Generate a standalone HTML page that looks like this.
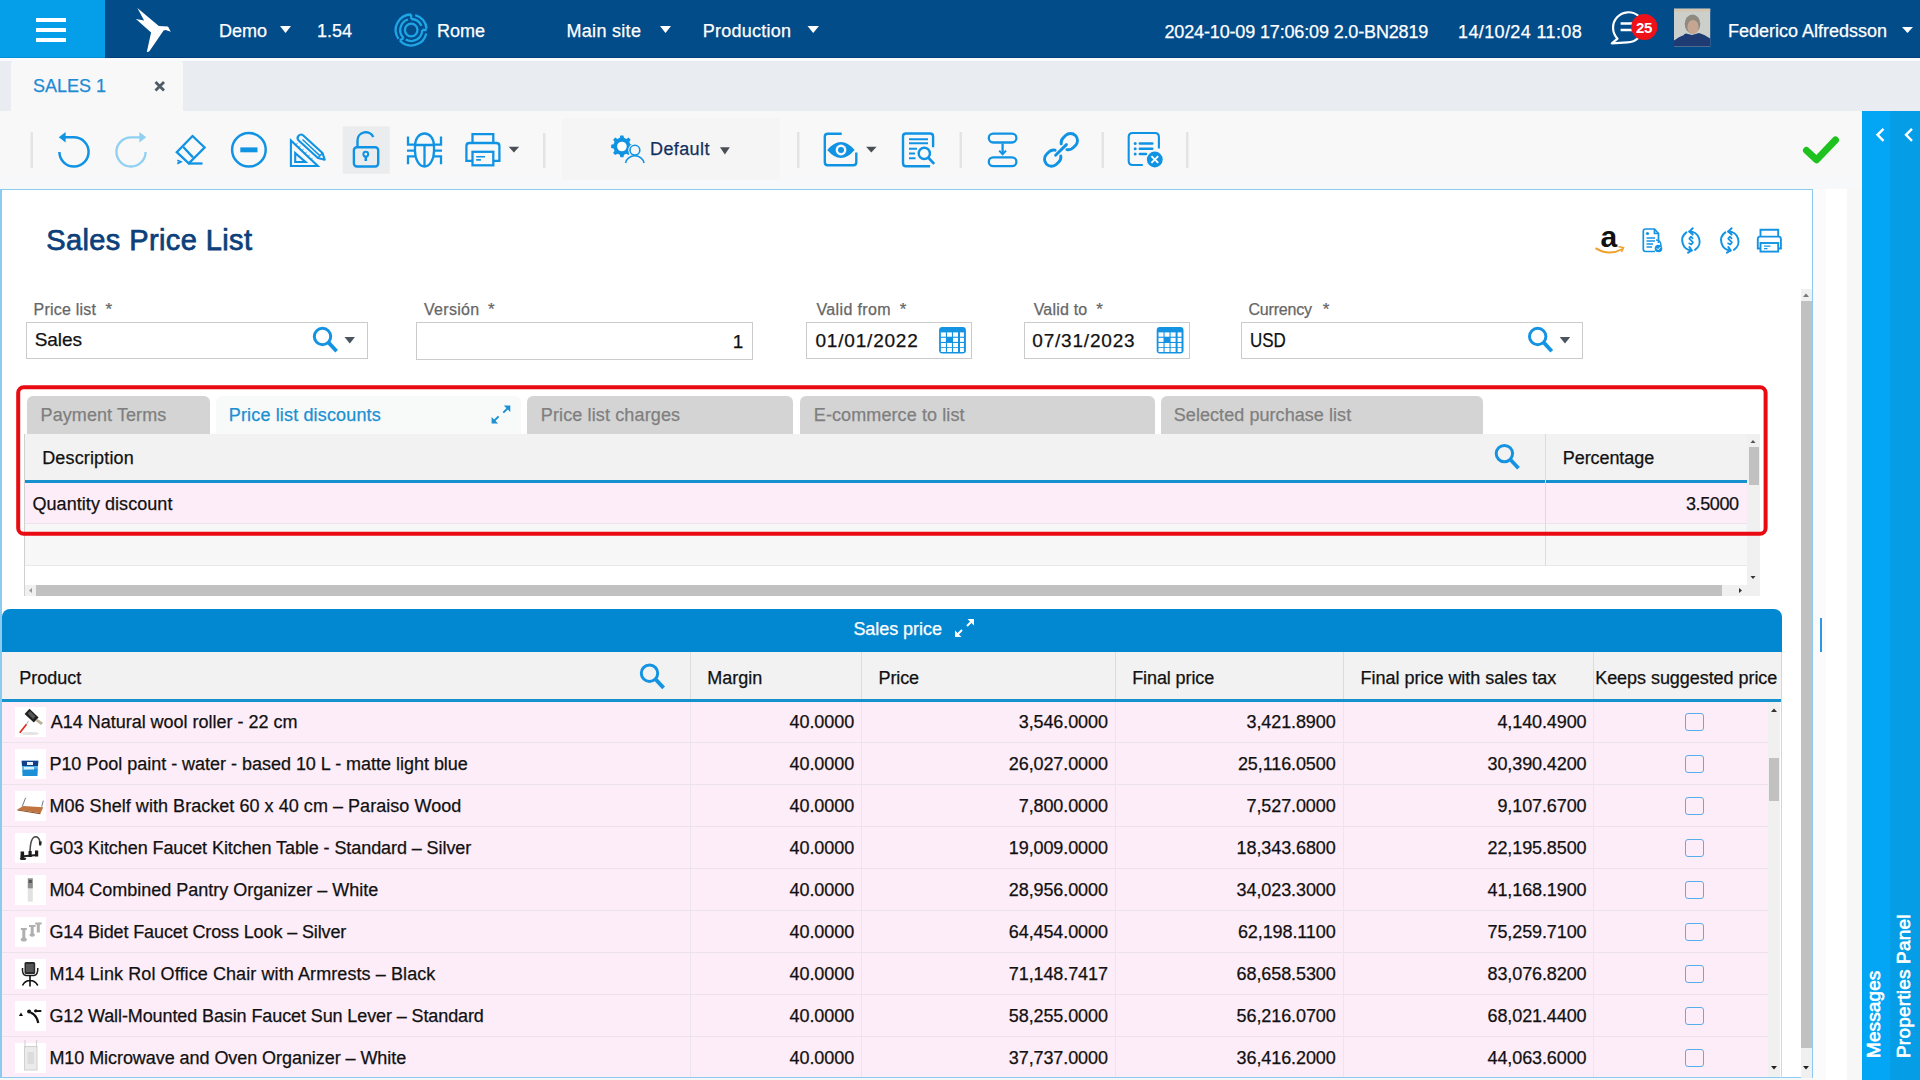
<!DOCTYPE html>
<html><head><meta charset="utf-8">
<style>
html,body{margin:0;padding:0}
body{width:1920px;height:1080px;position:relative;overflow:hidden;background:#f7f7f7;font-family:"Liberation Sans",sans-serif;color:#111}
.a{position:absolute;white-space:nowrap;line-height:1;-webkit-text-stroke:0.25px currentColor}
.r{position:absolute}
svg{position:absolute;overflow:visible}
</style></head>
<body>

<div class="r" style="left:0px;top:0px;width:1920px;height:58px;background:#034c8a;"></div>
<div class="r" style="left:0px;top:57px;width:1920px;height:1px;background:#023f78;"></div>
<div class="r" style="left:0px;top:0px;width:105px;height:58px;background:#049fe8;"></div>
<div class="r" style="left:0px;top:57px;width:105px;height:1px;background:#0390d8;"></div>
<div class="r" style="left:36px;top:18px;width:30px;height:4px;background:#fff;"></div>
<div class="r" style="left:36px;top:28px;width:30px;height:4px;background:#fff;"></div>
<div class="r" style="left:36px;top:38px;width:30px;height:4px;background:#fff;"></div>
<svg style="left:0;top:0" width="1920" height="58">
  <path d="M137.4,8.1 L158.8,26.1 L168,26.4 L170.8,31.7 L165.6,30 L163.6,30.5 L150.6,49.5 Q149,52.5 146.8,52 L151.1,32.4 L135.9,18.9 L144.1,20.6 Z" fill="#fff"/>
  <path d="M411.20,14.50 A15.5,15.5 0 0 0 398.50,38.89 M415.21,15.03 A15.5,15.5 0 0 1 426.64,28.65 M426.30,33.49 A15.5,15.5 0 0 1 399.86,40.57 M411.20,19.00 A11,11 0 0 1 421.40,25.88 M407.98,19.48 A11,11 0 0 0 403.70,38.04 M422.20,30.00 A11,11 0 0 1 405.70,39.53 M411.20,19.00 L411.20,14.50 M422.20,30.00 L426.70,30.00 M403.70,38.04 L399.86,40.57" fill="none" stroke="#1ea6e6" stroke-width="2.3"/>
  <circle cx="411.2" cy="30" r="6.3" fill="none" stroke="#1ea6e6" stroke-width="2.3"/>
  <path d="M280,26 L291,26 L285.5,33 Z" fill="#fff"/>
  <path d="M660,26 L671,26 L665.5,33 Z" fill="#fff"/>
  <path d="M807.5,26 L819,26 L813.2,33 Z" fill="#fff"/>
  <path d="M1902,27 L1913,27 L1907.5,33 Z" fill="#fff"/>
  <!-- chat -->
  <path d="M1638.46,15.84 A15.5,15.5 0 0 0 1617.54,38.67 L1611.8,43.3 L1627.5,42.3 A15.5,15.5 0 0 0 1638.46,37.76" fill="none" stroke="#fff" stroke-width="2.2" stroke-linejoin="round"/>
  <path d="M1620.6,23.5 L1634,23.5 M1620.6,30 L1634,30" stroke="#fff" stroke-width="2.4"/>
  <circle cx="1644.3" cy="27" r="13.1" fill="#ee1118"/>
  <!-- avatar -->
  <rect x="1674" y="8.7" width="36.2" height="37.9" fill="#cdd0ca"/>
  <rect x="1674" y="8.7" width="36.2" height="3" fill="#d3c6b2"/>
  <ellipse cx="1692.5" cy="24" rx="7.8" ry="9.5" fill="#8f8a80"/>
  <ellipse cx="1693" cy="27" rx="5.6" ry="7" fill="#c6a592"/>
  <path d="M1674,46.6 L1674,40 Q1680,35.5 1686,33.5 L1692,35 L1699,33 Q1706,35 1710.2,38.5 L1710.2,46.6 Z" fill="#1f3b73"/>
  <path d="M1674,40 Q1679,36 1684,34.5" fill="none" stroke="#c9d6e6" stroke-width="1"/>
</svg>
<div class="a" style="left:219.00px;top:21.65px;font-size:18px;color:#fff;">Demo</div>
<div class="a" style="left:317.00px;top:21.65px;font-size:18px;color:#fff;">1.54</div>
<div class="a" style="left:437.00px;top:21.65px;font-size:18px;color:#fff;">Rome</div>
<div class="a" style="left:566.50px;top:21.65px;font-size:18px;color:#fff;letter-spacing:0.3px;">Main site</div>
<div class="a" style="left:702.70px;top:21.65px;font-size:18px;color:#fff;letter-spacing:0.25px;">Production</div>
<div class="a" style="left:1164.50px;top:22.65px;font-size:18px;color:#fff;letter-spacing:-0.15px;">2024-10-09 17:06:09 2.0-BN2819</div>
<div class="a" style="left:1458.00px;top:22.65px;font-size:18px;color:#fff;letter-spacing:0.38px;">14/10/24 11:08</div>
<div class="a" style="left:1728.00px;top:21.65px;font-size:18px;color:#fff;">Federico Alfredsson</div>
<div class="a" style="left:1636.00px;top:19.74px;font-size:15px;color:#fff;font-weight:bold;-webkit-text-stroke:0;letter-spacing:-0.3px;">25</div>
<div class="r" style="left:0px;top:58px;width:1920px;height:53px;background:#e9ecf0;"></div>
<div class="r" style="left:0px;top:58px;width:1920px;height:3px;background:#f9fafb;"></div>
<div class="r" style="left:11px;top:61px;width:172px;height:50px;background:#f8f8f9;border-radius:3px 3px 0 0;"></div>
<div class="a" style="left:33.00px;top:77.05px;font-size:18px;color:#1e8bd3;">SALES 1</div>
<svg style="left:0;top:0" width="200" height="120"><path d="M155.5,82 L164,90.5 M164,82 L155.5,90.5" stroke="#4f5b66" stroke-width="2.8"/></svg>
<div class="r" style="left:0px;top:111px;width:1862px;height:78px;background:#f8f8f8;"></div>
<div class="r" style="left:0px;top:178px;width:1862px;height:11px;background:#f6f8fa;"></div>
<div class="r" style="left:562px;top:118px;width:218px;height:62px;background:#f5f5f6;"></div>
<div class="a" style="left:650.00px;top:139.85px;font-size:18px;color:#13305c;letter-spacing:0.4px;">Default</div>
<div class="r" style="left:1862px;top:111px;width:28px;height:969px;background:#03a5f5;"></div>
<div class="r" style="left:1890px;top:111px;width:30px;height:969px;background:#049de6;"></div>
<div class="r" style="left:1813px;top:189px;width:13px;height:891px;background:#fbfbfb;"></div>
<div class="r" style="left:1826px;top:189px;width:21px;height:891px;background:#ffffff;"></div>
<div class="r" style="left:0;top:189px;width:1813px;height:889px;background:#fff;border:1px solid #8ccbf0;border-left:2px solid #8ccbf0;box-sizing:border-box"></div>
<div class="r" style="left:1820px;top:618px;width:1.5px;height:34px;background:#2b98e6;"></div>
<div class="a" style="left:46.20px;top:226.02px;font-size:29px;color:#0d3f7a;letter-spacing:0.4px;-webkit-text-stroke:0.75px #0d3f7a;">Sales Price List</div>
<svg style="left:0;top:0" width="1920" height="300">
  <text x="1600.5" y="247" font-family="Liberation Sans" font-weight="bold" font-size="30" fill="#111">a</text>
  <path d="M1595.5,248.2 Q1609,256.5 1622.5,249" fill="none" stroke="#f0a02c" stroke-width="2"/>
  <path d="M1618.5,246.5 L1623.5,247.8 L1621.5,252" fill="none" stroke="#f0a02c" stroke-width="1.6"/>
  <g fill="none" stroke="#1493e3" stroke-width="1.7">
    <path d="M1658.5,243 L1658.5,236 M1655,251.5 L1645.5,251.5 Q1643.3,251.5 1643.3,249.3 L1643.3,231.3 Q1643.3,229 1645.5,229 L1654.5,229 L1658.5,233.5 L1658.5,236"/>
    <path d="M1654.5,229 L1654.5,233.5 L1658.5,233.5"/>
    <path d="M1646.5,238 L1655,238 M1646.5,241 L1655,241 M1646.5,244 L1653,244 M1646.5,247 L1652,247" stroke-width="1.3"/>
    <path d="M1656,240 Q1661,240 1661,246" stroke-width="1.4"/>
  </g>
  <circle cx="1647.5" cy="233.5" r="1.6" fill="#1493e3"/>
  <circle cx="1658.5" cy="248.5" r="3.8" fill="#1493e3"/>
  <path d="M1656.8,248.3 L1658.2,249.8 L1660.5,247" fill="none" stroke="#fff" stroke-width="1"/>

  <g fill="none" stroke="#1493e3" stroke-width="2" stroke-linecap="round" stroke-linejoin="round">
    <path d="M1689.3,231.4 A10,10 0 0 1 1695.0,249.8"/>
    <path d="M1692.7,228.3 L1689.3,231.6 L1692.7,234.6"/>
    <path d="M1686.4,232.4 A10,10 0 0 0 1691.7,250.5"/>
    <path d="M1689.5,247.1 L1691.7,250.5 L1688.1,252.7"/>
    <path d="M1692.7,238.4 L1691.0,236.6 L1689.3,238.6 L1693.0,242.4 L1691.3,244.6 L1689.2,243.3" stroke-width="1.7"/>
  </g>
  <g fill="none" stroke="#1493e3" stroke-width="2" stroke-linecap="round" stroke-linejoin="round">
    <path d="M1728.2,231.4 A10,10 0 0 1 1733.9,249.8"/>
    <path d="M1731.6,228.3 L1728.2,231.6 L1731.6,234.6"/>
    <path d="M1725.3,232.4 A10,10 0 0 0 1730.6,250.5"/>
    <path d="M1728.4,247.1 L1730.6,250.5 L1727.0,252.7"/>
    <path d="M1731.6,238.4 L1729.9,236.6 L1728.2,238.6 L1731.9,242.4 L1730.2,244.6 L1728.1,243.3" stroke-width="1.7"/>
  </g>
  <g fill="none" stroke="#1493e3" stroke-width="1.9">
    <path d="M1760.5,236.5 L1760.5,229.8 L1778.2,229.8 L1778.2,236.5"/>
    <path d="M1760.5,248.5 L1757.8,248.5 L1757.8,239 Q1757.8,236.6 1760.2,236.6 L1778.5,236.6 Q1780.9,236.6 1780.9,239 L1780.9,248.5 L1778.2,248.5"/>
    <rect x="1760.5" y="243" width="17.7" height="8.6"/>
    <path d="M1764,246.2 L1770.5,246.2 M1764,248.6 L1767.5,248.6" stroke-width="1.3"/>
  </g>
</svg>
<div class="a" style="left:33.60px;top:301.81px;font-size:16px;color:#666;letter-spacing:0.2px;">Price list</div>
<div class="a" style="left:105.50px;top:301.18px;font-size:17px;color:#666;">*</div>
<div class="a" style="left:424.00px;top:301.81px;font-size:16px;color:#666;letter-spacing:0.3px;">Versión</div>
<div class="a" style="left:488.00px;top:301.18px;font-size:17px;color:#666;">*</div>
<div class="a" style="left:816.50px;top:301.81px;font-size:16px;color:#666;letter-spacing:0.35px;">Valid from</div>
<div class="a" style="left:899.70px;top:301.18px;font-size:17px;color:#666;">*</div>
<div class="a" style="left:1033.70px;top:301.81px;font-size:16px;color:#666;letter-spacing:0.2px;">Valid to</div>
<div class="a" style="left:1096.30px;top:301.18px;font-size:17px;color:#666;">*</div>
<div class="a" style="left:1248.50px;top:301.81px;font-size:16px;color:#666;letter-spacing:-0.2px;">Currency</div>
<div class="a" style="left:1322.80px;top:301.18px;font-size:17px;color:#666;">*</div>
<div class="r" style="left:26px;top:322px;width:341.5px;height:37px;background:#fff;border:1.5px solid #cbcbcb;box-sizing:border-box"></div>
<div class="r" style="left:416px;top:322px;width:336.5px;height:38px;background:#fff;border:1.5px solid #cbcbcb;box-sizing:border-box"></div>
<div class="r" style="left:806px;top:322px;width:166px;height:37px;background:#fff;border:1.5px solid #cbcbcb;box-sizing:border-box"></div>
<div class="r" style="left:1023.5px;top:322px;width:166.0px;height:37px;background:#fff;border:1.5px solid #cbcbcb;box-sizing:border-box"></div>
<div class="r" style="left:1241px;top:322px;width:341.5px;height:37px;background:#fff;border:1.5px solid #cbcbcb;box-sizing:border-box"></div>
<div class="a" style="left:34.70px;top:330.02px;font-size:19px;color:#111;letter-spacing:-0.05px;">Sales</div>
<div class="a" style="right:1176.80px;top:331.52px;font-size:19px;color:#111;">1</div>
<div class="a" style="left:815.50px;top:330.82px;font-size:19px;color:#111;letter-spacing:0.8px;">01/01/2022</div>
<div class="a" style="left:1032.30px;top:330.82px;font-size:19px;color:#111;letter-spacing:0.8px;">07/31/2023</div>
<div class="a" style="left:1250.20px;top:331.06px;font-size:19.5px;color:#111;transform:scaleX(0.87);transform-origin:0 0;">USD</div>
<svg style="left:0;top:0" width="1920" height="400"><circle cx="322.50" cy="336.50" r="8.20" fill="none" stroke="#1493e3" stroke-width="3.0"/><path d="M328.40,342.40 L336.60,351.20" stroke="#1493e3" stroke-width="3.75" stroke-linecap="butt"/><path d="M344.5,337 L355,337 L349.8,343.6 Z" fill="#4a5560"/><circle cx="1537.70" cy="336.50" r="8.20" fill="none" stroke="#1493e3" stroke-width="3.0"/><path d="M1543.60,342.40 L1551.80,351.20" stroke="#1493e3" stroke-width="3.75" stroke-linecap="butt"/><path d="M1559.7,337 L1570.2,337 L1565,343.6 Z" fill="#4a5560"/><rect x="939.1" y="326.9" width="26.8" height="26.6" rx="3.2" fill="#1493e3"/><rect x="940.9" y="332.4" width="5.0" height="4.3" fill="#fff"/><rect x="947.0" y="332.4" width="4.9" height="4.3" fill="#fff"/><rect x="953.0" y="332.4" width="5.0" height="4.3" fill="#fff"/><rect x="960.0" y="332.4" width="3.9" height="4.3" fill="#fff"/><rect x="940.9" y="337.8" width="5.0" height="4.1" fill="#fff"/><rect x="953.0" y="337.8" width="5.0" height="4.1" fill="#fff"/><rect x="960.0" y="337.8" width="3.9" height="4.1" fill="#fff"/><rect x="940.9" y="343.0" width="5.0" height="4.2" fill="#fff"/><rect x="947.0" y="343.0" width="4.9" height="4.2" fill="#fff"/><rect x="953.0" y="343.0" width="5.0" height="4.2" fill="#fff"/><rect x="960.0" y="343.0" width="3.9" height="4.2" fill="#fff"/><rect x="940.9" y="348.0" width="5.0" height="4.0" fill="#fff"/><rect x="947.0" y="348.0" width="4.9" height="4.0" fill="#fff"/><rect x="953.0" y="348.0" width="5.0" height="4.0" fill="#fff"/><rect x="960.0" y="348.0" width="3.9" height="4.0" fill="#fff"/><rect x="1156.7" y="326.9" width="26.8" height="26.6" rx="3.2" fill="#1493e3"/><rect x="1158.5" y="332.4" width="5.0" height="4.3" fill="#fff"/><rect x="1164.6" y="332.4" width="4.9" height="4.3" fill="#fff"/><rect x="1170.6" y="332.4" width="5.0" height="4.3" fill="#fff"/><rect x="1177.6" y="332.4" width="3.9" height="4.3" fill="#fff"/><rect x="1158.5" y="337.8" width="5.0" height="4.1" fill="#fff"/><rect x="1170.6" y="337.8" width="5.0" height="4.1" fill="#fff"/><rect x="1177.6" y="337.8" width="3.9" height="4.1" fill="#fff"/><rect x="1158.5" y="343.0" width="5.0" height="4.2" fill="#fff"/><rect x="1164.6" y="343.0" width="4.9" height="4.2" fill="#fff"/><rect x="1170.6" y="343.0" width="5.0" height="4.2" fill="#fff"/><rect x="1177.6" y="343.0" width="3.9" height="4.2" fill="#fff"/><rect x="1158.5" y="348.0" width="5.0" height="4.0" fill="#fff"/><rect x="1164.6" y="348.0" width="4.9" height="4.0" fill="#fff"/><rect x="1170.6" y="348.0" width="5.0" height="4.0" fill="#fff"/><rect x="1177.6" y="348.0" width="3.9" height="4.0" fill="#fff"/></svg>
<div class="r" style="left:27px;top:396px;width:183px;height:38px;background:#d4d4d4;border-radius:6px 6px 0 0"></div>
<div class="r" style="left:215.5px;top:396px;width:305.5px;height:38px;background:#f8f9f9;border-radius:6px 6px 0 0"></div>
<div class="r" style="left:527px;top:396px;width:266px;height:38px;background:#d4d4d4;border-radius:6px 6px 0 0"></div>
<div class="r" style="left:799.5px;top:396px;width:355.0px;height:38px;background:#d4d4d4;border-radius:6px 6px 0 0"></div>
<div class="r" style="left:1161px;top:396px;width:322px;height:38px;background:#d4d4d4;border-radius:6px 6px 0 0"></div>
<div class="a" style="left:40.60px;top:405.65px;font-size:18px;color:#7f7f7f;letter-spacing:0.08px;">Payment Terms</div>
<div class="a" style="left:228.80px;top:405.65px;font-size:18px;color:#1b90d2;letter-spacing:0.15px;">Price list discounts</div>
<div class="a" style="left:540.80px;top:405.65px;font-size:18px;color:#7f7f7f;letter-spacing:0.13px;">Price list charges</div>
<div class="a" style="left:813.80px;top:405.65px;font-size:18px;color:#7f7f7f;letter-spacing:0.1px;">E-commerce to list</div>
<div class="a" style="left:1173.80px;top:405.65px;font-size:18px;color:#7f7f7f;letter-spacing:0.06px;">Selected purchase list</div>
<div class="r" style="left:24px;top:434px;width:1px;height:162px;background:#d0d0d0;"></div>
<div class="r" style="left:25px;top:434px;width:1722px;height:46px;background:#f2f2f2;"></div>
<div class="r" style="left:25px;top:480px;width:1722px;height:3px;background:#1592cd;"></div>
<div class="r" style="left:25px;top:483px;width:1722px;height:41px;background:#fdedf8;"></div>
<div class="r" style="left:25px;top:523px;width:1722px;height:1px;background:#ece4ea;"></div>
<div class="r" style="left:25px;top:524px;width:1722px;height:42px;background:#f7f7f7;"></div>
<div class="r" style="left:25px;top:565px;width:1722px;height:1px;background:#e8e8e8;"></div>
<div class="r" style="left:1545px;top:434px;width:1px;height:132px;background:#dcdcdc;"></div>
<div class="r" style="left:1747px;top:434px;width:12.5px;height:162px;background:#f0f0f0;"></div>
<div class="r" style="left:1748.5px;top:447px;width:10px;height:38px;background:#c1c1c1;"></div>
<div class="r" style="left:36px;top:585px;width:1686px;height:11px;background:#c1c1c1;"></div>
<div class="r" style="left:25px;top:585px;width:11px;height:11px;background:#f0f0f0;"></div>
<div class="r" style="left:1722px;top:585px;width:25px;height:11px;background:#f0f0f0;"></div>
<div class="a" style="left:42.20px;top:448.65px;font-size:18px;color:#111;letter-spacing:0.15px;">Description</div>
<div class="a" style="left:1562.80px;top:448.95px;font-size:18px;color:#111;letter-spacing:-0.08px;">Percentage</div>
<div class="a" style="left:32.50px;top:494.65px;font-size:18px;color:#111;letter-spacing:0.05px;">Quantity discount</div>
<div class="a" style="right:181.40px;top:495.05px;font-size:18px;color:#111;letter-spacing:-0.4px;">3.5000</div>
<svg style="left:0;top:0" width="1920" height="700"><path d="M493.1,421.9 L498.6,416.4 M508.8,407.1 L503.3,412.6" stroke="#1b90d2" stroke-width="2"/><path d="M491.6,423.4 L491.6,416.9 L498.1,423.4 Z M510.3,405.6 L510.3,412.1 L503.8,405.6 Z" fill="#1b90d2"/><circle cx="1504.40" cy="453.60" r="8.20" fill="none" stroke="#1493e3" stroke-width="3.0"/><path d="M1510.30,459.50 L1518.50,468.30" stroke="#1493e3" stroke-width="3.75" stroke-linecap="butt"/><path d="M1750.5,443 L1755.5,443 L1753,440 Z" fill="#555"/><path d="M1750.5,576 L1755.5,576 L1753,579 Z" fill="#333"/><path d="M29,590.5 L32,588 L32,593 Z" fill="#999"/><path d="M1742,590.5 L1739,588 L1739,593 Z" fill="#333"/></svg>
<div class="r" style="left:2px;top:609px;width:1780px;height:43px;background:#0288d1;border-radius:8px 8px 0 0"></div>
<div class="a" style="left:853.40px;top:620.15px;font-size:18px;color:#fff;letter-spacing:-0.05px;">Sales price</div>
<div class="r" style="left:2px;top:652px;width:1779px;height:47px;background:#f2f2f2;"></div>
<div class="r" style="left:2px;top:699px;width:1779px;height:3px;background:#1592cd;"></div>
<div class="r" style="left:1781px;top:652px;width:1px;height:426px;background:#d6d6d6;"></div>
<div class="r" style="left:690px;top:652px;width:1.3px;height:47px;background:#dcdcdc;"></div>
<div class="r" style="left:861px;top:652px;width:1.3px;height:47px;background:#dcdcdc;"></div>
<div class="r" style="left:1115px;top:652px;width:1.3px;height:47px;background:#dcdcdc;"></div>
<div class="r" style="left:1343px;top:652px;width:1.3px;height:47px;background:#dcdcdc;"></div>
<div class="r" style="left:1593px;top:652px;width:1.3px;height:47px;background:#dcdcdc;"></div>
<svg style="left:0;top:0" width="1920" height="700"><path d="M956.5,635.5 L962,630 M972.5,620.5 L967,626" stroke="#fff" stroke-width="2"/><path d="M955,637 L955,630.5 L961.5,637 Z M974,619 L974,625.5 L967.5,619 Z" fill="#fff"/><circle cx="649.50" cy="673.20" r="8.20" fill="none" stroke="#1493e3" stroke-width="3.0"/><path d="M655.40,679.10 L663.60,687.90" stroke="#1493e3" stroke-width="3.75" stroke-linecap="butt"/></svg>
<div class="a" style="left:19.20px;top:668.65px;font-size:18px;color:#111;">Product</div>
<div class="a" style="left:707.20px;top:668.65px;font-size:18px;color:#111;">Margin</div>
<div class="a" style="left:878.50px;top:668.65px;font-size:18px;color:#111;letter-spacing:-0.1px;">Price</div>
<div class="a" style="left:1132.20px;top:668.65px;font-size:18px;color:#111;letter-spacing:-0.1px;">Final price</div>
<div class="a" style="left:1360.60px;top:668.65px;font-size:18px;color:#111;letter-spacing:-0.02px;">Final price with sales tax</div>
<div class="a" style="left:1595.20px;top:668.65px;font-size:18px;color:#111;letter-spacing:-0.05px;">Keeps suggested price</div>
<div class="r" style="left:2px;top:702px;width:1766px;height:42px;background:#fdedf8;"></div>
<div class="r" style="left:2px;top:742px;width:1766px;height:1px;background:#ece3ea;"></div>
<div class="r" style="left:690px;top:702px;width:1px;height:42px;background:#eee4eb;"></div>
<div class="r" style="left:861px;top:702px;width:1px;height:42px;background:#eee4eb;"></div>
<div class="r" style="left:1115px;top:702px;width:1px;height:42px;background:#eee4eb;"></div>
<div class="r" style="left:1343px;top:702px;width:1px;height:42px;background:#eee4eb;"></div>
<div class="r" style="left:1593px;top:702px;width:1px;height:42px;background:#eee4eb;"></div>
<div class="a" style="left:50.70px;top:712.95px;font-size:18px;color:#111;letter-spacing:-0.01px;">A14 Natural wool roller - 22 cm</div>
<div class="a" style="right:1065.80px;top:712.95px;font-size:18px;color:#111;letter-spacing:-0.05px;">40.0000</div>
<div class="a" style="right:812.20px;top:712.95px;font-size:18px;color:#111;letter-spacing:-0.1px;">3,546.0000</div>
<div class="a" style="right:584.40px;top:712.95px;font-size:18px;color:#111;letter-spacing:-0.1px;">3,421.8900</div>
<div class="a" style="right:333.50px;top:712.95px;font-size:18px;color:#111;letter-spacing:-0.1px;">4,140.4900</div>
<div class="r" style="left:1685.2px;top:713.3px;width:18.5px;height:17.4px;border:1.5px solid #5aaee3;border-radius:3px;box-sizing:border-box"></div>
<div class="r" style="left:15.4px;top:707px;width:30.2px;height:29.5px;background:#fff;"></div>
<div class="r" style="left:2px;top:744px;width:1766px;height:42px;background:#fdedf8;"></div>
<div class="r" style="left:2px;top:784px;width:1766px;height:1px;background:#ece3ea;"></div>
<div class="r" style="left:690px;top:744px;width:1px;height:42px;background:#eee4eb;"></div>
<div class="r" style="left:861px;top:744px;width:1px;height:42px;background:#eee4eb;"></div>
<div class="r" style="left:1115px;top:744px;width:1px;height:42px;background:#eee4eb;"></div>
<div class="r" style="left:1343px;top:744px;width:1px;height:42px;background:#eee4eb;"></div>
<div class="r" style="left:1593px;top:744px;width:1px;height:42px;background:#eee4eb;"></div>
<div class="a" style="left:49.40px;top:754.95px;font-size:18px;color:#111;letter-spacing:-0.021px;">P10 Pool paint - water - based 10 L - matte light blue</div>
<div class="a" style="right:1065.80px;top:754.95px;font-size:18px;color:#111;letter-spacing:-0.05px;">40.0000</div>
<div class="a" style="right:812.20px;top:754.95px;font-size:18px;color:#111;letter-spacing:-0.1px;">26,027.0000</div>
<div class="a" style="right:584.40px;top:754.95px;font-size:18px;color:#111;letter-spacing:-0.1px;">25,116.0500</div>
<div class="a" style="right:333.50px;top:754.95px;font-size:18px;color:#111;letter-spacing:-0.1px;">30,390.4200</div>
<div class="r" style="left:1685.2px;top:755.3px;width:18.5px;height:17.4px;border:1.5px solid #5aaee3;border-radius:3px;box-sizing:border-box"></div>
<div class="r" style="left:15.4px;top:749px;width:30.2px;height:29.5px;background:#fff;"></div>
<div class="r" style="left:2px;top:786px;width:1766px;height:42px;background:#fdedf8;"></div>
<div class="r" style="left:2px;top:826px;width:1766px;height:1px;background:#ece3ea;"></div>
<div class="r" style="left:690px;top:786px;width:1px;height:42px;background:#eee4eb;"></div>
<div class="r" style="left:861px;top:786px;width:1px;height:42px;background:#eee4eb;"></div>
<div class="r" style="left:1115px;top:786px;width:1px;height:42px;background:#eee4eb;"></div>
<div class="r" style="left:1343px;top:786px;width:1px;height:42px;background:#eee4eb;"></div>
<div class="r" style="left:1593px;top:786px;width:1px;height:42px;background:#eee4eb;"></div>
<div class="a" style="left:49.40px;top:796.95px;font-size:18px;color:#111;letter-spacing:0.043px;">M06 Shelf with Bracket 60 x 40 cm – Paraiso Wood</div>
<div class="a" style="right:1065.80px;top:796.95px;font-size:18px;color:#111;letter-spacing:-0.05px;">40.0000</div>
<div class="a" style="right:812.20px;top:796.95px;font-size:18px;color:#111;letter-spacing:-0.1px;">7,800.0000</div>
<div class="a" style="right:584.40px;top:796.95px;font-size:18px;color:#111;letter-spacing:-0.1px;">7,527.0000</div>
<div class="a" style="right:333.50px;top:796.95px;font-size:18px;color:#111;letter-spacing:-0.1px;">9,107.6700</div>
<div class="r" style="left:1685.2px;top:797.3px;width:18.5px;height:17.4px;border:1.5px solid #5aaee3;border-radius:3px;box-sizing:border-box"></div>
<div class="r" style="left:15.4px;top:791px;width:30.2px;height:29.5px;background:#fff;"></div>
<div class="r" style="left:2px;top:828px;width:1766px;height:42px;background:#fdedf8;"></div>
<div class="r" style="left:2px;top:868px;width:1766px;height:1px;background:#ece3ea;"></div>
<div class="r" style="left:690px;top:828px;width:1px;height:42px;background:#eee4eb;"></div>
<div class="r" style="left:861px;top:828px;width:1px;height:42px;background:#eee4eb;"></div>
<div class="r" style="left:1115px;top:828px;width:1px;height:42px;background:#eee4eb;"></div>
<div class="r" style="left:1343px;top:828px;width:1px;height:42px;background:#eee4eb;"></div>
<div class="r" style="left:1593px;top:828px;width:1px;height:42px;background:#eee4eb;"></div>
<div class="a" style="left:49.40px;top:838.95px;font-size:18px;color:#111;letter-spacing:-0.08px;">G03 Kitchen Faucet Kitchen Table - Standard – Silver</div>
<div class="a" style="right:1065.80px;top:838.95px;font-size:18px;color:#111;letter-spacing:-0.05px;">40.0000</div>
<div class="a" style="right:812.20px;top:838.95px;font-size:18px;color:#111;letter-spacing:-0.1px;">19,009.0000</div>
<div class="a" style="right:584.40px;top:838.95px;font-size:18px;color:#111;letter-spacing:-0.1px;">18,343.6800</div>
<div class="a" style="right:333.50px;top:838.95px;font-size:18px;color:#111;letter-spacing:-0.1px;">22,195.8500</div>
<div class="r" style="left:1685.2px;top:839.3px;width:18.5px;height:17.4px;border:1.5px solid #5aaee3;border-radius:3px;box-sizing:border-box"></div>
<div class="r" style="left:15.4px;top:833px;width:30.2px;height:29.5px;background:#fff;"></div>
<div class="r" style="left:2px;top:870px;width:1766px;height:42px;background:#fdedf8;"></div>
<div class="r" style="left:2px;top:910px;width:1766px;height:1px;background:#ece3ea;"></div>
<div class="r" style="left:690px;top:870px;width:1px;height:42px;background:#eee4eb;"></div>
<div class="r" style="left:861px;top:870px;width:1px;height:42px;background:#eee4eb;"></div>
<div class="r" style="left:1115px;top:870px;width:1px;height:42px;background:#eee4eb;"></div>
<div class="r" style="left:1343px;top:870px;width:1px;height:42px;background:#eee4eb;"></div>
<div class="r" style="left:1593px;top:870px;width:1px;height:42px;background:#eee4eb;"></div>
<div class="a" style="left:49.40px;top:880.95px;font-size:18px;color:#111;letter-spacing:-0.01px;">M04 Combined Pantry Organizer – White</div>
<div class="a" style="right:1065.80px;top:880.95px;font-size:18px;color:#111;letter-spacing:-0.05px;">40.0000</div>
<div class="a" style="right:812.20px;top:880.95px;font-size:18px;color:#111;letter-spacing:-0.1px;">28,956.0000</div>
<div class="a" style="right:584.40px;top:880.95px;font-size:18px;color:#111;letter-spacing:-0.1px;">34,023.3000</div>
<div class="a" style="right:333.50px;top:880.95px;font-size:18px;color:#111;letter-spacing:-0.1px;">41,168.1900</div>
<div class="r" style="left:1685.2px;top:881.3px;width:18.5px;height:17.4px;border:1.5px solid #5aaee3;border-radius:3px;box-sizing:border-box"></div>
<div class="r" style="left:15.4px;top:875px;width:30.2px;height:29.5px;background:#fff;"></div>
<div class="r" style="left:2px;top:912px;width:1766px;height:42px;background:#fdedf8;"></div>
<div class="r" style="left:2px;top:952px;width:1766px;height:1px;background:#ece3ea;"></div>
<div class="r" style="left:690px;top:912px;width:1px;height:42px;background:#eee4eb;"></div>
<div class="r" style="left:861px;top:912px;width:1px;height:42px;background:#eee4eb;"></div>
<div class="r" style="left:1115px;top:912px;width:1px;height:42px;background:#eee4eb;"></div>
<div class="r" style="left:1343px;top:912px;width:1px;height:42px;background:#eee4eb;"></div>
<div class="r" style="left:1593px;top:912px;width:1px;height:42px;background:#eee4eb;"></div>
<div class="a" style="left:49.40px;top:922.95px;font-size:18px;color:#111;letter-spacing:-0.12px;">G14 Bidet Faucet Cross Look – Silver</div>
<div class="a" style="right:1065.80px;top:922.95px;font-size:18px;color:#111;letter-spacing:-0.05px;">40.0000</div>
<div class="a" style="right:812.20px;top:922.95px;font-size:18px;color:#111;letter-spacing:-0.1px;">64,454.0000</div>
<div class="a" style="right:584.40px;top:922.95px;font-size:18px;color:#111;letter-spacing:-0.1px;">62,198.1100</div>
<div class="a" style="right:333.50px;top:922.95px;font-size:18px;color:#111;letter-spacing:-0.1px;">75,259.7100</div>
<div class="r" style="left:1685.2px;top:923.3px;width:18.5px;height:17.4px;border:1.5px solid #5aaee3;border-radius:3px;box-sizing:border-box"></div>
<div class="r" style="left:15.4px;top:917px;width:30.2px;height:29.5px;background:#fff;"></div>
<div class="r" style="left:2px;top:954px;width:1766px;height:42px;background:#fdedf8;"></div>
<div class="r" style="left:2px;top:994px;width:1766px;height:1px;background:#ece3ea;"></div>
<div class="r" style="left:690px;top:954px;width:1px;height:42px;background:#eee4eb;"></div>
<div class="r" style="left:861px;top:954px;width:1px;height:42px;background:#eee4eb;"></div>
<div class="r" style="left:1115px;top:954px;width:1px;height:42px;background:#eee4eb;"></div>
<div class="r" style="left:1343px;top:954px;width:1px;height:42px;background:#eee4eb;"></div>
<div class="r" style="left:1593px;top:954px;width:1px;height:42px;background:#eee4eb;"></div>
<div class="a" style="left:49.40px;top:964.95px;font-size:18px;color:#111;letter-spacing:0.09px;">M14 Link Rol Office Chair with Armrests – Black</div>
<div class="a" style="right:1065.80px;top:964.95px;font-size:18px;color:#111;letter-spacing:-0.05px;">40.0000</div>
<div class="a" style="right:812.20px;top:964.95px;font-size:18px;color:#111;letter-spacing:-0.1px;">71,148.7417</div>
<div class="a" style="right:584.40px;top:964.95px;font-size:18px;color:#111;letter-spacing:-0.1px;">68,658.5300</div>
<div class="a" style="right:333.50px;top:964.95px;font-size:18px;color:#111;letter-spacing:-0.1px;">83,076.8200</div>
<div class="r" style="left:1685.2px;top:965.3px;width:18.5px;height:17.4px;border:1.5px solid #5aaee3;border-radius:3px;box-sizing:border-box"></div>
<div class="r" style="left:15.4px;top:959px;width:30.2px;height:29.5px;background:#fff;"></div>
<div class="r" style="left:2px;top:996px;width:1766px;height:42px;background:#fdedf8;"></div>
<div class="r" style="left:2px;top:1036px;width:1766px;height:1px;background:#ece3ea;"></div>
<div class="r" style="left:690px;top:996px;width:1px;height:42px;background:#eee4eb;"></div>
<div class="r" style="left:861px;top:996px;width:1px;height:42px;background:#eee4eb;"></div>
<div class="r" style="left:1115px;top:996px;width:1px;height:42px;background:#eee4eb;"></div>
<div class="r" style="left:1343px;top:996px;width:1px;height:42px;background:#eee4eb;"></div>
<div class="r" style="left:1593px;top:996px;width:1px;height:42px;background:#eee4eb;"></div>
<div class="a" style="left:49.40px;top:1006.95px;font-size:18px;color:#111;letter-spacing:-0.104px;">G12 Wall-Mounted Basin Faucet Sun Lever – Standard</div>
<div class="a" style="right:1065.80px;top:1006.95px;font-size:18px;color:#111;letter-spacing:-0.05px;">40.0000</div>
<div class="a" style="right:812.20px;top:1006.95px;font-size:18px;color:#111;letter-spacing:-0.1px;">58,255.0000</div>
<div class="a" style="right:584.40px;top:1006.95px;font-size:18px;color:#111;letter-spacing:-0.1px;">56,216.0700</div>
<div class="a" style="right:333.50px;top:1006.95px;font-size:18px;color:#111;letter-spacing:-0.1px;">68,021.4400</div>
<div class="r" style="left:1685.2px;top:1007.3px;width:18.5px;height:17.4px;border:1.5px solid #5aaee3;border-radius:3px;box-sizing:border-box"></div>
<div class="r" style="left:15.4px;top:1001px;width:30.2px;height:29.5px;background:#fff;"></div>
<div class="r" style="left:2px;top:1038px;width:1766px;height:39px;background:#fdedf8;"></div>
<div class="r" style="left:690px;top:1038px;width:1px;height:39px;background:#eee4eb;"></div>
<div class="r" style="left:861px;top:1038px;width:1px;height:39px;background:#eee4eb;"></div>
<div class="r" style="left:1115px;top:1038px;width:1px;height:39px;background:#eee4eb;"></div>
<div class="r" style="left:1343px;top:1038px;width:1px;height:39px;background:#eee4eb;"></div>
<div class="r" style="left:1593px;top:1038px;width:1px;height:39px;background:#eee4eb;"></div>
<div class="a" style="left:49.40px;top:1048.95px;font-size:18px;color:#111;letter-spacing:-0.06px;">M10 Microwave and Oven Organizer – White</div>
<div class="a" style="right:1065.80px;top:1048.95px;font-size:18px;color:#111;letter-spacing:-0.05px;">40.0000</div>
<div class="a" style="right:812.20px;top:1048.95px;font-size:18px;color:#111;letter-spacing:-0.1px;">37,737.0000</div>
<div class="a" style="right:584.40px;top:1048.95px;font-size:18px;color:#111;letter-spacing:-0.1px;">36,416.2000</div>
<div class="a" style="right:333.50px;top:1048.95px;font-size:18px;color:#111;letter-spacing:-0.1px;">44,063.6000</div>
<div class="r" style="left:1685.2px;top:1049.3px;width:18.5px;height:17.4px;border:1.5px solid #5aaee3;border-radius:3px;box-sizing:border-box"></div>
<div class="r" style="left:15.4px;top:1043px;width:30.2px;height:29.5px;background:#fff;"></div>
<div class="r" style="left:1768px;top:702px;width:12px;height:375px;background:#f0f0f0;"></div>
<div class="r" style="left:1769px;top:758px;width:10px;height:43px;background:#c1c1c1;"></div>
<div class="r" style="left:1800.5px;top:288.5px;width:11px;height:789px;background:#f0f0f0;"></div>
<div class="r" style="left:1800.5px;top:301px;width:11px;height:746.5px;background:#c1c1c1;"></div>
<svg style="left:0;top:0" width="1920" height="1080">
<g>
 <!-- row0 roller -->
 <path d="M24.6,714 L29.5,708.8 L38.6,717.6 L33.8,722.6 Z" fill="#1f1f1f"/>
 <path d="M27.5,713.5 L30,711 L35.5,716.5 L33,719 Z" fill="#555"/>
 <path d="M37.5,719 L43,722.8 L41,725 L35.6,721 Z" fill="#b9b29a"/>
 <path d="M26.5,724.3 L19.8,732.8" stroke="#e4281c" stroke-width="1.7"/>
 <path d="M26.5,724.3 L28.5,721" stroke="#999" stroke-width="0.8"/>
 <ellipse cx="30" cy="733.5" rx="9" ry="1.6" fill="#e4e4e4"/>
 <!-- row1 paint bucket -->
 <path d="M21.7,760.8 L38.3,760.8 L37.3,776 L22.7,776 Z" fill="#52b4e8"/>
 <path d="M21.7,760.8 L38.3,760.8 L38,766 L22,766 Z" fill="#123f8a"/>
 <path d="M22.5,770 L37.6,768.5 L37.3,776 L22.7,776 Z" fill="#1d8fd6"/>
 <rect x="27" y="762" width="6" height="3" fill="#e8f2fb"/>
 <rect x="24" y="767" width="10" height="2.5" fill="#d8f0fb"/>
 <!-- row2 shelf -->
 <path d="M23.3,806 L43.3,807.2 L40.5,813.3 L17.2,809.4 Z" fill="#c0743f"/>
 <path d="M17.2,809.4 L40.5,813.3 L40.3,814.2 L17.5,810.4 Z" fill="#8a4d25"/>
 <path d="M22.2,806.5 L25.6,797.8 M41.7,806.7 L43.3,800.6" stroke="#6f7a86" stroke-width="1"/>
 <!-- row3 faucet -->
 <path d="M30,854 Q30,837 35.6,836.8 Q39,836.8 40,842" fill="none" stroke="#4a4a4a" stroke-width="1.6"/>
 <path d="M38.8,841.5 L41.8,841.5 L41.2,845.5 L39.2,845.5 Z" fill="#222"/>
 <path d="M20.6,856.5 L37.2,855" stroke="#222" stroke-width="1.8"/>
 <rect x="20.6" y="851.5" width="3.5" height="7.5" fill="#1c1c1c"/>
 <rect x="28.5" y="851" width="3.2" height="6" fill="#1c1c1c"/>
 <rect x="35" y="850.5" width="3.2" height="6" fill="#1c1c1c"/>
 <ellipse cx="23" cy="858.8" rx="3.2" ry="1.3" fill="#222"/>
 <!-- row4 pantry organizer -->
 <rect x="27.8" y="878.3" width="5" height="23.4" fill="#e2e2e0"/>
 <rect x="27.8" y="878.3" width="5" height="10" fill="#8f8f8f"/>
 <rect x="28.8" y="880" width="3" height="3" fill="#555"/>
 <!-- row5 bidet faucet -->
 <g fill="#b0b0b0">
  <rect x="22.3" y="929" width="3" height="10"/><ellipse cx="23.8" cy="939.5" rx="3" ry="2"/><rect x="20.8" y="928" width="6" height="2"/>
  <rect x="30.7" y="926" width="3" height="9"/><rect x="29" y="925" width="6.5" height="2"/><ellipse cx="32.2" cy="935" rx="2.8" ry="1.8"/>
  <rect x="36.8" y="923.5" width="3" height="9"/><rect x="35.2" y="922.5" width="6.5" height="2"/>
 </g>
 <!-- row6 chair -->
 <rect x="24.5" y="962" width="10.7" height="12" rx="1.5" fill="#2a2a2a"/>
 <rect x="26" y="964" width="7.7" height="8" fill="#555"/>
 <path d="M22.5,968 Q22,975 26,975.5 L34,975.5 Q38,975 37.8,968" fill="none" stroke="#1a1a1a" stroke-width="1.5"/>
 <path d="M30,975.5 L30,980.5 M22.5,985.5 Q25,980.5 30,980.5 Q35,980.5 37.8,985.5 M30,980.5 L30,986.4" fill="none" stroke="#111" stroke-width="1.6"/>
 <!-- row7 wall faucet -->
 <path d="M18.8,1016 L21,1012.5 L23,1016 Z" fill="#111"/>
 <circle cx="29.1" cy="1011.6" r="2" fill="#111"/>
 <path d="M30.5,1012.5 Q36.5,1014.5 38.3,1023" fill="none" stroke="#111" stroke-width="2.2"/>
 <path d="M34.5,1011.2 L41.3,1011" stroke="#111" stroke-width="1.8"/>
 <circle cx="35.8" cy="1010.8" r="1.6" fill="#111"/>
 <!-- row8 microwave organizer -->
 <rect x="24.5" y="1046.5" width="12.5" height="23.5" fill="#ebebeb" stroke="#d0d0d0" stroke-width="1"/>
 <rect x="27.5" y="1052" width="6.5" height="12" fill="#dcdcdc"/>
 <path d="M25,1048 L25,1040 M36.5,1048 L36.5,1040" stroke="#d5d5d5" stroke-width="1.2"/>
</g><path d="M1771,712 L1777,712 L1774,708.5 Z" fill="#333"/><path d="M1771,1066 L1777,1066 L1774,1069.5 Z" fill="#222"/><path d="M1803,297 L1809,297 L1806,293.5 Z" fill="#777"/><path d="M1803,1066 L1809,1066 L1806,1069.5 Z" fill="#222"/><rect x="18.2" y="387.2" width="1747.4" height="146.6" rx="5.5" fill="none" stroke="#e90a12" stroke-width="4"/></svg>
<svg style="left:0;top:0" width="1920" height="200">
  <g fill="#e4e4e7">
    <rect x="30.5" y="132" width="2.5" height="36"/>
    <rect x="543" y="133" width="2.5" height="35"/>
    <rect x="797" y="132" width="2.5" height="36"/>
    <rect x="959.5" y="132" width="2.5" height="36"/>
    <rect x="1101.5" y="132" width="2.5" height="36"/>
    <rect x="1186" y="132" width="2.5" height="36"/>
  </g>
  <rect x="342.7" y="126.4" width="47" height="47.3" fill="#eaecee"/>
  <g fill="none" stroke="#1193e4" stroke-width="2.5" stroke-linecap="butt" stroke-linejoin="miter">
    <path d="M63,137.3 L74,137.3 A14.6,14.6 0 1 1 59.4,152"/>
  </g>
  <path d="M58.8,137.3 L65.6,132 L65.6,142.6 Z" fill="#1193e4"/>
  <g fill="none" stroke="#8fd0f3" stroke-width="2.3">
    <path d="M142,137.3 L131,137.3 A14.6,14.6 0 1 0 145.6,152"/>
  </g>
  <path d="M146.2,137.3 L139.4,132 L139.4,142.6 Z" fill="#8fd0f3"/>
  <g fill="none" stroke="#1193e4" stroke-width="2.3" stroke-linejoin="miter">
    <path d="M192.5,136 L204.6,147.5 L188.8,163.3 L176.8,152.1 Z"/>
    <path d="M183.3,147 L193,157.4"/>
    <path d="M188.8,163.5 L202.5,163.5"/>
    <path d="M177.3,160.2 L180.8,161.8 L177.3,163.6" stroke-width="1.8"/>
    <circle cx="248.9" cy="149.8" r="16.8" stroke-width="2.5"/>
  </g>
  <rect x="240.3" y="147.4" width="17.2" height="4.9" fill="#1193e4"/>
  <g fill="none" stroke="#1193e4" stroke-width="2.1" stroke-linejoin="miter">
    <path d="M290.9,140.5 L290.9,166 L317.8,166 Z"/>
    <path d="M295.2,153.1 L295.2,162 L305.5,162 Z"/>
    <path d="M303.3,135.5 L322.5,153.1 L324.7,159.7 L317.9,158.1 L298.7,140.5 A3.4,3.4 0 0 1 303.3,135.5 Z" stroke-linejoin="round"/>
    <path d="M302.5,139.5 L319.8,155.6" stroke-width="1.5"/>
    <path d="M317.9,158.1 L322.5,153.1" stroke-width="1.5"/>
  </g>
  <g stroke="#1193e4" stroke-width="1" fill="none">
    <path d="M296,144.5 L297.5,143.2 M299,147.5 L300.5,146.2 M302,150.5 L303.5,149.2 M305,153.5 L306.5,152.2 M308,156.5 L309.5,155.2 M311,159.5 L312.5,158.2"/>
  </g>
  <g fill="none" stroke="#1193e4" stroke-width="2.4">
    <rect x="353.9" y="147.3" width="24.3" height="19.2" rx="3"/>
    <path d="M357.5,147 L357.5,140.5 A8.3,8.3 0 0 1 373.3,137"/>
    <circle cx="365.8" cy="154.2" r="2.4" stroke-width="2"/>
    <path d="M365.8,156 L365.8,161" stroke-width="2.6"/>
  </g>
  <g fill="none" stroke="#1193e4" stroke-width="2.3">
    <path d="M415,146 C415,138 419.5,133.5 424.5,133.5 C429.5,133.5 434,138 434,146 L434,151 C434,160 429.5,166.5 424.5,166.5 C419.5,166.5 415,160 415,151 Z"/>
    <path d="M415,145 L434,145 M424.5,145 L424.5,166.5"/>
    <path d="M408,136.5 L408,144.6 L415,144.6 M407,150.6 L415,150.6 M415,156.3 L408,156.3 L408,164.3"/>
    <path d="M441,136.5 L441,144.6 L434,144.6 M442,150.6 L434,150.6 M434,156.3 L441,156.3 L441,164.3"/>
  </g>
  <g fill="none" stroke="#1193e4" stroke-width="2.3">
    <path d="M472.5,142 L472.5,134.2 L493.3,134.2 L493.3,142"/>
    <path d="M472.5,160.8 L466.4,160.8 L466.4,146 Q466.4,143 469.4,143 L496.4,143 Q499.4,143 499.4,146 L499.4,160.8 L493.3,160.8"/>
    <rect x="472.5" y="151.8" width="20.8" height="13.5"/>
    <path d="M476.2,156.7 L485,156.7 M476.2,159.9 L480.9,159.9" stroke-width="1.6"/>
  </g>
  <g fill="#4a4f55">
    <path d="M508.7,146.7 L519.2,146.7 L513.9,152.4 Z"/>
    <path d="M720,147.2 L729.8,147.2 L724.9,154.5 Z"/>
    <path d="M866.1,146.7 L876.6,146.7 L871.3,152.4 Z"/>
  </g>
  <g transform="translate(621.9,146.5)" fill="#1193e4">
    <path d="M-1.8,-10.8 L1.8,-10.8 L2.4,-8 L5.2,-6.8 L7.6,-8.4 L10.1,-5.9 L8.5,-3.5 L9.6,-0.7 L12.4,0 L12.4,3.6 L9.6,4.2 L8.5,6.9 L10.1,9.3 L7.6,11.8 L5.2,10.2 L2.4,11.4 L1.8,14.2 L-1.8,14.2 L-2.4,11.4 L-5.2,10.2 L-7.6,11.8 L-10.1,9.3 L-8.5,6.9 L-9.6,4.2 L-12.4,3.6 L-12.4,0 L-9.6,-0.7 L-8.5,-3.5 L-10.1,-5.9 L-7.6,-8.4 L-5.2,-6.8 L-2.4,-8 Z" transform="translate(0,-1.7) scale(0.87)"/>
  </g>
  <circle cx="621.9" cy="146.5" r="4.8" fill="#ffffff"/>
  <circle cx="634.9" cy="150.2" r="6.6" fill="#f5f5f6"/>
  <path d="M624,164 A12,12 0 0 1 646,164 L646,170 L624,170 Z" fill="#f5f5f6"/>
  <g fill="none" stroke="#1193e4" stroke-width="1.6">
    <circle cx="634.9" cy="150.2" r="4.9"/>
    <path d="M625.6,163 A9.3,8.5 0 0 1 644,163"/>
  </g>
  <g fill="none" stroke="#1193e4" stroke-width="2.4">
    <path d="M841.7,133.8 L827.8,133.8 Q824.8,133.8 824.8,136.8 L824.8,162.3 Q824.8,165.3 827.8,165.3 L853.3,165.3 Q856.3,165.3 856.3,162.3 L856.3,152.4"/>
    <path d="M930.1,166.3 L906,166.3 Q903,166.3 903,163.3 L903,136.5 Q903,133.5 906,133.5 L930.1,133.5 Q933.1,133.5 933.1,136.5 L933.1,147.3"/>
    <circle cx="924.3" cy="153.4" r="5.6"/>
    <path d="M928.3,157.6 L934.2,163.9" stroke-width="2.8"/>
  </g>
  <path d="M827.2,150 Q841,134 854.6,150 Q841,166 827.2,150 Z" fill="#1193e4"/>
  <circle cx="841" cy="150" r="5.4" fill="#f7f7f7"/>
  <circle cx="841" cy="150" r="3" fill="#1193e4"/>
  <g stroke="#1193e4" stroke-width="2">
    <path d="M909,139.2 L928,139.2 M909,143.3 L928,143.3 M909,148.7 L917,148.7 M909,153.4 L915,153.4 M909,158.2 L915.5,158.2"/>
  </g>
  <g fill="none" stroke="#1193e4" stroke-width="2.3">
    <rect x="988.8" y="133.6" width="27.6" height="8.9" rx="4.4"/>
    <rect x="988.8" y="157.3" width="27.6" height="8.9" rx="4.4"/>
    <path d="M1002.6,143.6 L1002.6,153"/>
    <path d="M999.2,150.6 L1002.6,154.2 L1006,150.6" stroke-width="2"/>
  </g>
  <g fill="none" stroke="#1193e4" stroke-width="2.9" stroke-linecap="round">
    <path id="lk" d="M1061.2,143.9 A7,7 0 0 1 1063.25,137.85 L1065.55,135.55 A7,7 0 0 1 1075.45,145.45 L1073.15,147.75 A7,7 0 0 1 1066.9,149.6"/>
    <path d="M1061.2,143.9 A7,7 0 0 1 1063.25,137.85 L1065.55,135.55 A7,7 0 0 1 1075.45,145.45 L1073.15,147.75 A7,7 0 0 1 1066.9,149.6" transform="rotate(180 1061 149.9)"/>
    <path d="M1055.6,155.2 L1066.4,144.6"/>
  </g>
  <g fill="none" stroke="#1193e4" stroke-width="2.1">
    <path d="M1142.8,165 L1132.7,165 Q1128.7,165 1128.7,161 L1128.7,137 Q1128.7,133 1132.7,133 L1154.9,133 Q1158.9,133 1158.9,137 L1158.9,148.6"/>
  </g>
  <g fill="#1193e4">
    <circle cx="1135.2" cy="143.5" r="1.5"/><circle cx="1135.2" cy="148.8" r="1.5"/><circle cx="1135.2" cy="153.9" r="1.5"/>
  </g>
  <g stroke="#1193e4" stroke-width="2.5" stroke-linecap="round">
    <path d="M1139.8,143.5 L1152.3,143.5 M1139.8,148.8 L1152.3,148.8 M1139.8,153.9 L1146,153.9"/>
  </g>
  <circle cx="1154.8" cy="159.5" r="9.3" fill="#f7f7f7"/>
  <circle cx="1154.8" cy="159.5" r="7.9" fill="#1193e4"/>
  <path d="M1151.4,156.1 L1158.2,162.9 M1158.2,156.1 L1151.4,162.9" stroke="#fff" stroke-width="1.9"/>
  <path d="M1806.5,150.5 L1816.5,159.8 L1835.5,140" fill="none" stroke="#1ec21e" stroke-width="7" stroke-linecap="round" stroke-linejoin="round"/>
  <g fill="none" stroke="#fff" stroke-width="2.4" stroke-linecap="butt">
    <path d="M1883.5,128.8 L1877.5,134.8 L1883.5,140.8"/>
    <path d="M1912,128.8 L1906,134.8 L1912,140.8"/>
  </g>
</svg>
<div class="a" style="left:1863.6px;top:1057.8px;font-size:19px;color:#fff;-webkit-text-stroke:0.65px #fff;letter-spacing:0.1px;transform-origin:0 0;transform:rotate(-90deg);line-height:19px">Messages</div>
<div class="a" style="left:1893.8px;top:1057.8px;font-size:19px;color:#fff;-webkit-text-stroke:0.65px #fff;letter-spacing:0.2px;transform-origin:0 0;transform:rotate(-90deg);line-height:19px">Properties Panel</div>
</body></html>
